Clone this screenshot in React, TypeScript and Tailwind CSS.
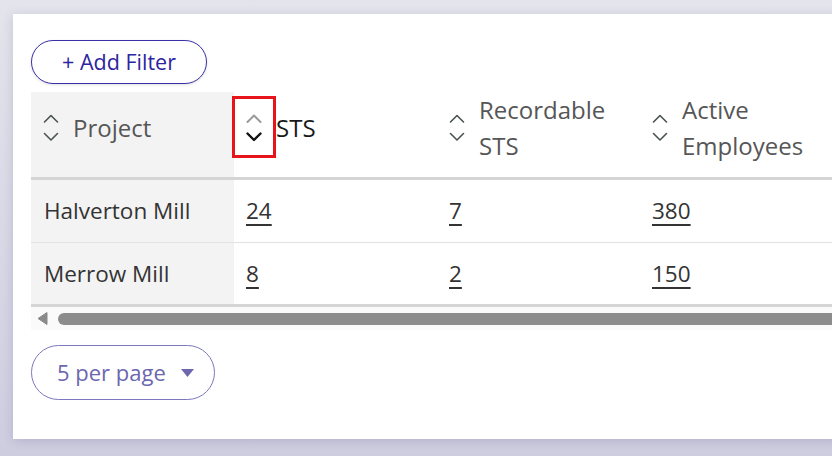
import type { ReactNode } from "react"

const font = { fontFamily: '"Open Sans", "Liberation Sans", sans-serif' }

function SortIcon({ active }: { active?: boolean }) {
    return (
        <svg width="18" height="30" viewBox="0 0 18 30" fill="none" className="shrink-0">
            <path
                d="M2.5 9 L9 2.5 L15.5 9"
                stroke={active ? "#9a9a9a" : "#4a5252"}
                strokeWidth={active ? 2 : 1.6}
                strokeLinecap="round"
                strokeLinejoin="round"
            />
            <path
                d="M2.5 20.5 L9 27 L15.5 20.5"
                stroke={active ? "#111111" : "#4a5252"}
                strokeWidth={active ? 2.4 : 1.6}
                strokeLinecap="round"
                strokeLinejoin="round"
            />
        </svg>
    )
}

function HeadCell({ children, first, active }: { children: ReactNode; first?: boolean; active?: boolean }) {
    return (
        <th
            className={`relative h-[85px] w-[203px] min-w-[203px] p-0 pb-[13px] text-left align-middle font-normal ${first ? "bg-[#f3f3f3]" : "bg-white"}`}
        >
            <div className="flex items-center pl-[11px]">
                <SortIcon active={active} />
                <span
                    className={`ml-[13px] text-[24px] leading-[36px] ${active ? "text-[#1a1a1a]" : "text-[#565656]"}`}
                >
                    {children}
                </span>
            </div>
            {active && (
                <div className="pointer-events-none absolute left-[-2px] top-[4px] h-[62px] w-[44px] border-[3px] border-[#e8141c]" />
            )}
        </th>
    )
}

const rows = [
    { project: "Halverton Mill", sts: 24, rec: 7, active: 380 },
    { project: "Merrow Mill", sts: 8, rec: 2, active: 150 },
]

function NumCell({ value }: { value: number }) {
    return (
        <td className="p-0 pl-[12px] align-middle">
            <span className="text-[22.5px] text-[#333] underline decoration-[1.5px] underline-offset-[5px]">{value}</span>
        </td>
    )
}

export default function App() {
    return (
        <div
            className="h-[456px] w-[832px] overflow-hidden bg-gradient-to-b from-[#e4e4ec] to-[#cecde0] pl-[13px] pt-[14px]"
            style={font}
        >
            <div className="h-[425px] w-[840px] bg-white pl-[18px] pt-[26px] shadow-[0_2px_10px_rgba(60,55,110,0.18)]">
                <button className="flex h-[44px] w-[176px] items-center justify-center rounded-full border-[1.5px] border-[#3a31a9] bg-white text-[21.5px] text-[#2e249f] shadow-[0_1px_3px_rgba(0,0,0,0.12)]">
                    + Add Filter
                </button>

                <div className="mt-[8px] w-[822px] overflow-hidden">
                    <table className="w-[812px] table-fixed border-collapse">
                        <thead>
                            <tr className="border-b-[3px] border-[#d5d5d5]">
                                <HeadCell first>Project</HeadCell>
                                <HeadCell active>STS</HeadCell>
                                <HeadCell>
                                    Recordable
                                    <br />
                                    STS
                                </HeadCell>
                                <HeadCell>
                                    Active
                                    <br />
                                    Employees
                                </HeadCell>
                            </tr>
                        </thead>
                        <tbody>
                            {rows.map((r, i) => (
                                <tr
                                    key={r.project}
                                    className={
                                        i === rows.length - 1
                                            ? "h-[63px] border-b-[3px] border-[#d5d5d5]"
                                            : "h-[64px] border-b border-[#e2e2e2]"
                                    }
                                >
                                    <td className="bg-[#f3f3f3] p-0 pl-[13px] align-middle text-[22.5px] text-[#333]">
                                        {r.project}
                                    </td>
                                    <NumCell value={r.sts} />
                                    <NumCell value={r.rec} />
                                    <NumCell value={r.active} />
                                </tr>
                            ))}
                        </tbody>
                    </table>
                    <div className="flex h-[23px] items-center bg-[#fafafa] pl-[6px]">
                        <svg width="11" height="13" viewBox="0 0 11 13" className="shrink-0">
                            <path d="M10 0.5 L10 12.5 L1 6.5 Z" fill="#8a8a8a" stroke="#8a8a8a" strokeLinejoin="round" />
                        </svg>
                        <div className="ml-[10px] h-[12px] flex-1 rounded-full bg-[#8c8c8c]" />
                    </div>
                </div>

                <button className="mt-[15px] flex h-[55px] w-[184px] items-center rounded-full border border-[#7c77bd] bg-white pl-[25px] text-[22px] text-[#6c67ae]">
                    5 per page
                    <svg width="13" height="8" viewBox="0 0 13 8" className="ml-[15px]">
                        <path d="M0 0 L13 0 L6.5 8 Z" fill="#6c67ae" />
                    </svg>
                </button>
            </div>
        </div>
    )
}
